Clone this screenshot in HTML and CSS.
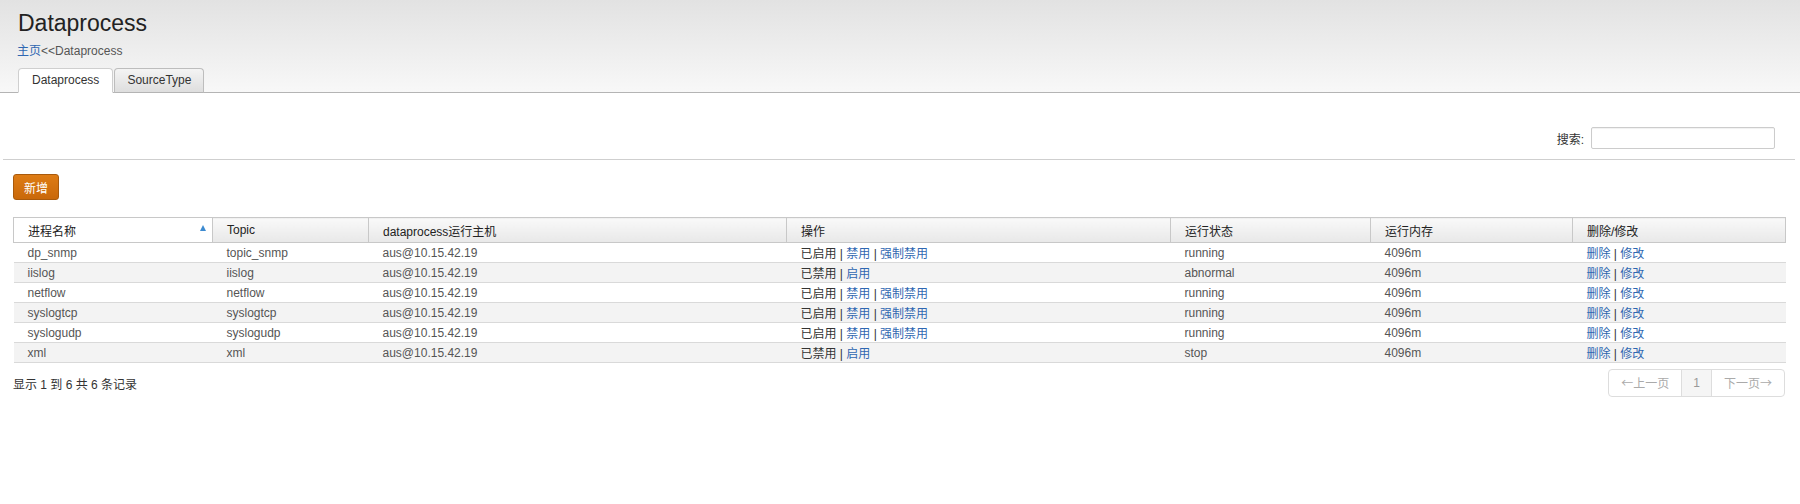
FILE: index.html
```html
<!DOCTYPE html>
<html lang="zh-CN">
<head>
<meta charset="utf-8">
<title>Dataprocess</title>
<link rel="stylesheet" href="styles.css">
</head>
<body>
<header class="page-header">
  <h1 class="title">Dataprocess</h1>
  <div class="breadcrumb"><a href="#">主页</a>&lt;&lt;Dataprocess</div>
  <ul class="tabs">
    <li class="tab active">Dataprocess</li>
    <li class="tab">SourceType</li>
  </ul>
</header>

<main class="content">
  <div class="search-row">
    <label class="search-label">搜索:</label>
    <input class="search-input" type="text">
  </div>
  <div class="divider"></div>
  <div class="toolbar">
    <button class="btn-add">新增</button>
  </div>

  <table class="grid">
    <colgroup>
      <col class="c1"><col class="c2"><col class="c3"><col class="c4"><col class="c5"><col class="c6"><col class="c7">
    </colgroup>
    <thead>
      <tr>
        <th class="sorted"><div class="th-inner"><span>进程名称</span><span class="sort-up"></span></div></th>
        <th>Topic</th>
        <th>dataprocess运行主机</th>
        <th>操作</th>
        <th>运行状态</th>
        <th>运行内存</th>
        <th>删除/修改</th>
      </tr>
    </thead>
    <tbody>
      <tr>
        <td>dp_snmp</td><td>topic_snmp</td><td>aus@10.15.42.19</td>
        <td class="ops">已启用 | <a href="#">禁用</a> | <a href="#">强制禁用</a></td>
        <td>running</td><td>4096m</td>
        <td class="ops"><a href="#">删除</a> | <a href="#">修改</a></td>
      </tr>
      <tr>
        <td>iislog</td><td>iislog</td><td>aus@10.15.42.19</td>
        <td class="ops">已禁用 | <a href="#">启用</a></td>
        <td>abnormal</td><td>4096m</td>
        <td class="ops"><a href="#">删除</a> | <a href="#">修改</a></td>
      </tr>
      <tr>
        <td>netflow</td><td>netflow</td><td>aus@10.15.42.19</td>
        <td class="ops">已启用 | <a href="#">禁用</a> | <a href="#">强制禁用</a></td>
        <td>running</td><td>4096m</td>
        <td class="ops"><a href="#">删除</a> | <a href="#">修改</a></td>
      </tr>
      <tr>
        <td>syslogtcp</td><td>syslogtcp</td><td>aus@10.15.42.19</td>
        <td class="ops">已启用 | <a href="#">禁用</a> | <a href="#">强制禁用</a></td>
        <td>running</td><td>4096m</td>
        <td class="ops"><a href="#">删除</a> | <a href="#">修改</a></td>
      </tr>
      <tr>
        <td>syslogudp</td><td>syslogudp</td><td>aus@10.15.42.19</td>
        <td class="ops">已启用 | <a href="#">禁用</a> | <a href="#">强制禁用</a></td>
        <td>running</td><td>4096m</td>
        <td class="ops"><a href="#">删除</a> | <a href="#">修改</a></td>
      </tr>
      <tr>
        <td>xml</td><td>xml</td><td>aus@10.15.42.19</td>
        <td class="ops">已禁用 | <a href="#">启用</a></td>
        <td>stop</td><td>4096m</td>
        <td class="ops"><a href="#">删除</a> | <a href="#">修改</a></td>
      </tr>
    </tbody>
  </table>

  <div class="table-footer">
    <div class="info">显示 1 到 6 共 6 条记录</div>
    <ul class="pager">
      <li class="pg prev"><span class="arrow">←</span>上一页</li>
      <li class="pg current">1</li>
      <li class="pg next">下一页<span class="arrow">→</span></li>
    </ul>
  </div>
</main>
</body>
</html>
```

FILE: styles.css
```css
* { box-sizing: border-box; }

body {
  margin: 0;
  font-family: "Liberation Sans", Arial, "Noto Sans CJK SC", sans-serif;
  font-size: 12px;
  color: #333;
  background: #fff;
}

a { color: #2f67b1; text-decoration: none; }

.page-header {
  background: linear-gradient(#e2e2e2, #f8f8f8);
  padding: 10px 0 0 0;
}

.title {
  margin: 0 0 0 18px;
  font-size: 23px;
  line-height: 26px;
  font-weight: normal;
  color: #222;
}

.breadcrumb {
  margin: 6px 0 0 17px;
  line-height: 18px;
  color: #555;
}

.tabs {
  list-style: none;
  margin: 8px 0 0 0;
  padding: 0 0 0 18px;
  display: flex;
  gap: 1px;
  border-bottom: 1px solid #b4b4b4;
}

.tab {
  height: 25px;
  line-height: 23px;
  padding: 0 12px;
  margin-bottom: -1px;
  border: 1px solid #bdbdbd;
  border-bottom-color: #b4b4b4;
  border-radius: 4px 4px 0 0;
  background: linear-gradient(#f4f4f4, #dedede);
  color: #333;
}

.tab.active {
  padding: 0 13px;
  background: #fff;
  border-color: #cfcfcf;
  border-bottom-color: #fff;
}

.content {
  padding-top: 34px;
}

.search-row {
  display: flex;
  justify-content: flex-end;
  align-items: center;
  padding-right: 25px;
}

.search-label {
  margin-right: 7px;
  color: #333;
}

.search-input {
  width: 184px;
  height: 22px;
  border: 1px solid #ccc;
  border-radius: 2px;
  box-shadow: inset 0 1px 1px rgba(0,0,0,0.06);
  padding: 0 4px;
  font: inherit;
}

.divider {
  margin: 10px 5px 0 3px;
  border-top: 1px solid #cfcfcf;
}

.toolbar {
  padding: 14px 13px 17px;
}

.btn-add {
  height: 26px;
  padding: 0 10px;
  border: 1px solid #a95a0c;
  border-radius: 3px;
  background: linear-gradient(#de7c15, #c9680a);
  color: #fff;
  font: inherit;
  font-size: 12px;
}

.grid {
  width: 1772px;
  margin: 0 0 0 13px;
  border-collapse: collapse;
  table-layout: fixed;
}

.c1 { width: 199px; }
.c2 { width: 156px; }
.c3 { width: 418px; }
.c4 { width: 384px; }
.c5 { width: 200px; }
.c6 { width: 202px; }
.c7 { width: 213px; }

.grid th {
  height: 25px;
  padding: 0 14px;
  text-align: left;
  font-weight: normal;
  color: #222;
  border: 1px solid #c8c8c8;
  background: linear-gradient(#f9f9f9, #e8e8e8);
}

.grid th.sorted {
  background: #fff;
  padding-right: 6px;
}

.th-inner {
  display: flex;
  justify-content: space-between;
  align-items: center;
}

.sort-up {
  width: 0;
  height: 0;
  border-left: 3.5px solid transparent;
  border-right: 3.5px solid transparent;
  border-bottom: 6px solid #3d8ad0;
  margin-top: -4px;
}

.grid td {
  height: 20px;
  padding: 0 14px;
  color: #555;
  border-bottom: 1px solid #d9d9d9;
  white-space: nowrap;
}

.grid td.ops { color: #333; }

.grid tbody tr:nth-child(even) td { background: #f3f3f3; }

.table-footer {
  display: flex;
  justify-content: space-between;
  align-items: center;
  margin: 6px 15px 0 13px;
}

.info { color: #333; }

.pager {
  list-style: none;
  margin: 0;
  padding: 0;
  display: flex;
  border: 1px solid #ddd;
  border-radius: 4px;
  overflow: hidden;
}

.pg {
  height: 26px;
  line-height: 26px;
  padding: 0 12px;
  color: #aaa;
}

.arrow {
  font-family: "Noto Sans CJK SC", sans-serif;
  font-size: 12px;
}

.pg + .pg { border-left: 1px solid #ddd; }

.pg.current {
  background: #f5f5f5;
  padding: 0 11px;
  color: #999;
}
```
